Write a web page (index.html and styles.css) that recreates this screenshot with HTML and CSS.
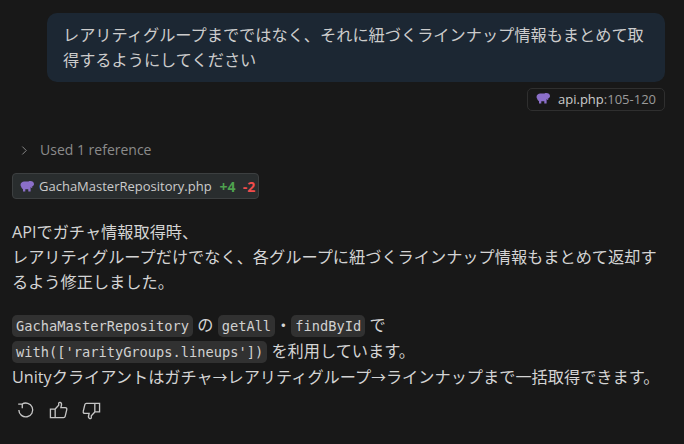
FILE: index.html
```html
<!DOCTYPE html>
<html lang="ja">
	<head>
		<meta charset="utf-8">
		<link rel="stylesheet" href="styles.css">
	</head>
	<body>
		<svg class="defs" width="0" height="0">
			<symbol id="elephant" viewBox="0 0 14 11">
				<path d="M.5 4C.5 1.600 2.400 .4 4.200 .4h4.300c.5-.4 1.200-.4 1.800-.4 2 0 3.700 1.100 3.700 3 0 1.300-.8 2.200-1.800 2.400V7h-1V5.600L10.600 6.400V10.500H8.300V8.300H5.300V10.500H3V8.200C2.200 7.900 1.500 7 1.300 6 .9 5.500 .5 4.800 .5 4z"/>
			</symbol>
		</svg>
		<div class="request">
			<div class="bubble">レアリティグループまでではなく、それに紐づくラインナップ情報もまとめて取得するようにしてください</div>
			<div class="attach">
				<span class="attach-chip">
					<svg class="elephant"><use href="#elephant"/></svg>
					<span class="attach-name">api.php<span class="lines">:105-120</span></span>
				</span>
			</div>
		</div>
		<div class="response">
			<div class="refs">
				<svg class="chevron" viewBox="0 0 8 12"><path d="M1.500 1.500L6 6l-4.500 4.500"/></svg>
				<span>Used 1 reference</span>
			</div>
			<div class="file-chip">
				<svg class="elephant"><use href="#elephant"/></svg>
				<span class="file-name">GachaMasterRepository.php</span>
				<span class="added">+4</span>
				<span class="removed">-2</span>
			</div>
			<p class="para">APIでガチャ情報取得時、<br>レアリティグループだけでなく、各グループに紐づくラインナップ情報もまとめて返却するよう修正しました。</p>
			<p class="para para-code"><code>GachaMasterRepository</code> の <code>getAll</code>・<code>findById</code> で<br><code>with(['rarityGroups.lineups'])</code> を利用しています。<br>Unityクライアントはガチャ<span class="arrow">→</span>レアリティグループ<span class="arrow">→</span>ラインナップまで一括取得できます。</p>
			<div class="actions">
				<svg class="action" viewBox="0 0 20 20"><path d="M6.200 3.400A7.300 7.300 0 1 1 3 9.500M6.600 7.500V3.200H2.300"/></svg>
				<svg class="action" viewBox="0 0 20 20"><path d="M6.500 8.500L10.200 4.500V2.700C10.200 1.700 11 1.200 11.800 1.500 13 2 13.400 3.300 13.100 4.500L12.500 7H17.200C18.300 7 19 8 18.700 9L17 16.200C16.800 17 16.200 17.500 15.400 17.500H6.500M6.500 8.500H1.500V17.500H6.500V8.500Z"/></svg>
				<svg class="action" viewBox="0 0 20 20"><path d="M13.500 11.500L9.800 15.500V17.300C9.800 18.300 9 18.800 8.200 18.500 7 18 6.600 16.700 6.900 15.500L7.500 13H2.800C1.700 13 1 12 1.300 11L3 3.800C3.200 3 3.800 2.500 4.600 2.500H13.500M13.500 11.500H18.500V2.500H13.500V11.500Z"/></svg>
			</div>
		</div>
	</body>
</html>
```

FILE: styles.css
```css
body {
	margin: 0;
	padding: 13px 19px 0 12px;
	background: #181818;
	color: #cccccc;
	font-family: "Open Sans", "Noto Sans CJK JP", sans-serif;
	font-size: 16.200px;
	line-height: 25px;
	overflow: hidden;
}
.defs {
	position: absolute;
}
.request {
	margin-left: 35px;
}
.bubble {
	padding: 10px 16px 9px;
	background: #1c2733;
	border-radius: 10px;
}
.attach {
	display: flex;
	justify-content: flex-end;
	margin-top: 6px;
}
.attach-chip {
	display: flex;
	align-items: center;
	gap: 8px;
	height: 21px;
	padding: 0 8px;
	border: 1px solid #2f2f2f;
	border-radius: 5px;
	font-size: 13px;
}
.elephant {
	width: 14px;
	height: 11px;
	fill: #8b6fc9;
}
.attach-chip .elephant {
	margin-top: -3px;
}
.lines {
	color: #9a9a9a;
}
.response {
	margin-top: 27px;
}
.refs {
	display: flex;
	align-items: center;
	gap: 12px;
	padding-left: 9px;
	color: #8b8b8b;
	font-size: 14px;
	line-height: 24px;
}
.chevron {
	width: 7px;
	height: 11px;
	fill: none;
	stroke: #8b8b8b;
	stroke-width: 1.100;
}
.file-chip {
	display: inline-flex;
	align-items: center;
	height: 24px;
	margin-top: 11px;
	padding: 0 3px 0 7px;
	background: #292d2e;
	border: 1px solid #3c3f40;
	border-radius: 4px;
	font-size: 13px;
}
.file-chip .elephant {
	margin-right: 5px;
}
.file-name {
	margin-right: 8px;
}
.added {
	margin-right: 7px;
	color: #4ea24e;
	font-size: 14px;
	font-weight: 700;
}
.removed {
	color: #f14c4c;
	font-size: 14px;
	font-weight: 700;
}
.para {
	margin: 21px 0 0;
	color: #d4d4d4;
}
.para-code {
	margin-top: 17px;
	line-height: 26px;
}
code {
	padding: 3px 4px;
	background: #313131;
	border-radius: 5px;
	color: #d0d0d0;
	font-family: "DejaVu Sans Mono", monospace;
	font-size: 13.700px;
	line-height: 16px;
}
.arrow {
	font-size: 14.700px;
}
.actions {
	display: flex;
	gap: 14px;
	margin-top: 11px;
	padding-left: 4px;
}
.action {
	width: 19px;
	height: 19px;
	fill: none;
	stroke: #c5c5c5;
	stroke-width: 1.400;
}
```
